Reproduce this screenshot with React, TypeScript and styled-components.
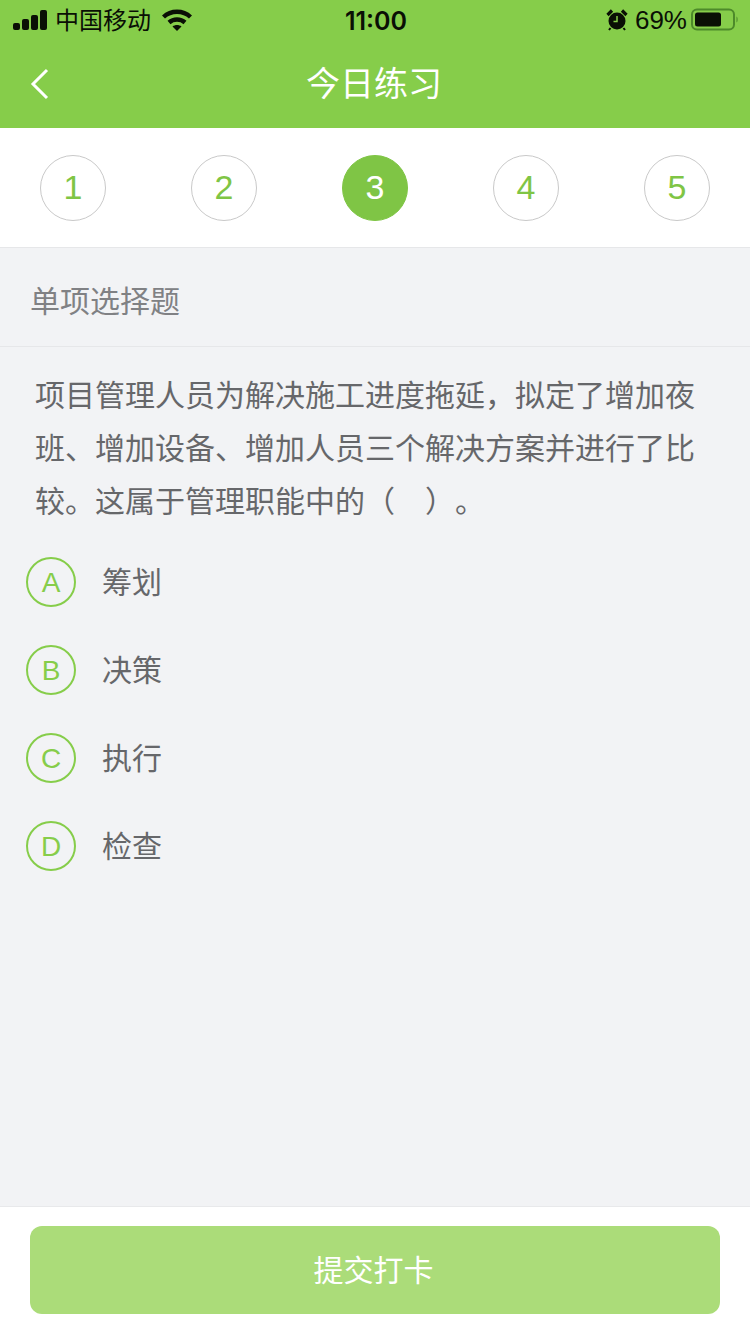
import React from "react";
import styled, { createGlobalStyle } from "styled-components";

const GlobalStyle = createGlobalStyle`
  html, body {
    margin: 0;
    padding: 0;
    background: #f2f3f5;
  }
  * {
    box-sizing: border-box;
  }
`;

const SPage = styled.div`
  width: 750px;
  height: 1334px;
  display: flex;
  flex-direction: column;
  background: #f2f3f5;
  font-family: "Liberation Sans", "Noto Sans CJK SC", sans-serif;
  text-spacing-trim: space-all;
  overflow: hidden;
`;

const SHeader = styled.header`
  height: 128px;
  background: #86cd4a;
  display: flex;
  flex-direction: column;
`;

const SStatusBar = styled.div`
  height: 40px;
  padding: 0 11px 0 13px;
  display: grid;
  grid-template-columns: 1fr auto 1fr;
  align-items: center;
  color: #0a0f05;
`;

const SStatusLeft = styled.div`
  display: flex;
  align-items: center;
`;

const SCarrier = styled.span`
  font-size: 24px;
  line-height: 1;
  margin-left: 8px;
  margin-right: 11px;
  padding-top: 2px;
`;

const STime = styled.span`
  font-family: Inter, "Liberation Sans", sans-serif;
  font-size: 25px;
  font-weight: 600;
  padding-top: 1px;
`;

const SStatusRight = styled.div`
  display: flex;
  align-items: center;
  justify-content: flex-end;
`;

const SBattery = styled.span`
  font-size: 26px;
  margin: 0 4px 0 7px;
`;

const SNavBar = styled.div`
  flex: 1;
  padding: 0 32px 0 30px;
  display: grid;
  grid-template-columns: 40px 1fr 40px;
  align-items: center;
`;

const STitle = styled.h1`
  margin: 0;
  color: #fff;
  font-size: 34px;
  font-weight: 400;
  text-align: center;
  line-height: 1;
`;

const SSteps = styled.nav`
  height: 120px;
  padding: 0 40px;
  background: #fff;
  border-bottom: 1px solid #e6e7e9;
  display: flex;
  align-items: center;
  justify-content: space-between;
`;

const SStep = styled.div<{ $active?: boolean }>`
  width: 66px;
  height: 66px;
  border-radius: 50%;
  border: 1px solid ${(p) => (p.$active ? "#7fc545" : "#c9c9c9")};
  background: ${(p) => (p.$active ? "#7fc545" : "#fff")};
  color: ${(p) => (p.$active ? "#fff" : "#7fc545")};
  font-size: 34px;
  display: flex;
  align-items: center;
  justify-content: center;
`;

const SSection = styled.div`
  height: 99px;
  padding: 4px 30px 0;
  border-bottom: 1px solid #e6e7e9;
  display: flex;
  align-items: center;
  color: #808184;
  font-size: 30px;
`;

const SMain = styled.main`
  flex: 1;
  display: flex;
  flex-direction: column;
`;

const SQuestion = styled.p`
  margin: 22px 0 0;
  padding: 0 35px;
  color: #66676a;
  font-size: 30px;
  line-height: 53px;
`;

const SOptions = styled.div`
  margin-top: 29px;
  padding-left: 26px;
  display: flex;
  flex-direction: column;
  gap: 38px;
`;

const SOption = styled.div`
  display: flex;
  align-items: center;
  height: 50px;
`;

const SBadge = styled.div`
  width: 50px;
  height: 50px;
  padding-top: 2px;
  border-radius: 50%;
  border: 2px solid #86cd4a;
  color: #86cd4a;
  font-size: 28px;
  display: flex;
  align-items: center;
  justify-content: center;
`;

const SOptionText = styled.span`
  margin-left: 26px;
  padding-bottom: 4px;
  color: #66676a;
  font-size: 30px;
`;

const SFooter = styled.footer`
  height: 128px;
  padding: 19px 30px;
  background: #fff;
  border-top: 1px solid #e8e9eb;
`;

const SSubmit = styled.button`
  width: 690px;
  height: 88px;
  padding: 0 3px 4px 0;
  border: 0;
  border-radius: 12px;
  background: #abdc79;
  color: #fff;
  font-family: inherit;
  font-size: 30px;
`;

const steps = [1, 2, 3, 4, 5];
const options = [
  { key: "A", text: "筹划" },
  { key: "B", text: "决策" },
  { key: "C", text: "执行" },
  { key: "D", text: "检查" },
];

function SignalIcon() {
  return (
    <svg width="34" height="20" viewBox="0 0 34 20" fill="#0a0f05">
      <rect x="0" y="13" width="7" height="7" rx="2" />
      <rect x="9" y="9" width="7" height="11" rx="2" />
      <rect x="18" y="5" width="7" height="15" rx="2" />
      <rect x="27" y="0" width="7" height="20" rx="2" />
    </svg>
  );
}

function WifiIcon() {
  return (
    <svg width="30" height="22" viewBox="0 0 30 22" fill="none" stroke="#0a0f05" strokeWidth="4.4">
      <path d="M1.5 8C9 1 21 1 28.5 8" />
      <path d="M7 13.5C11.5 9.5 18.5 9.5 23 13.5" />
      <path d="M10.5 17.5L15 22L19.5 17.5C17 15.5 13 15.5 10.5 17.5Z" fill="#0a0f05" stroke="none" />
    </svg>
  );
}

function AlarmIcon() {
  return (
    <svg width="22" height="22" viewBox="0 0 22 22">
      <circle cx="11" cy="12" r="8.5" fill="#0a0f05" />
      <path d="M1.5 6L6 1.5M20.5 6L16 1.5" stroke="#0a0f05" strokeWidth="3.2" />
      <path d="M4.5 19L3 21M17.5 19L19 21" stroke="#0a0f05" strokeWidth="2" />
      <path d="M11 7V12.5H7.5" stroke="#86cd4a" strokeWidth="1.5" fill="none" />
    </svg>
  );
}

function BatteryIcon() {
  return (
    <svg width="48" height="24" viewBox="0 0 48 24">
      <rect x="1" y="1.5" width="42" height="20" rx="5" fill="none" stroke="#4d8a2a" strokeWidth="2" />
      <rect x="4" y="4.5" width="26" height="14" rx="2.5" fill="#0a0f05" />
      <path d="M45.5 8.5C47 9 47 14 45.5 14.5Z" fill="#4d8a2a" />
    </svg>
  );
}

function BackIcon() {
  return (
    <svg width="20" height="32" viewBox="0 0 20 32" fill="none" stroke="#fff" strokeWidth="3">
      <path d="M17 2L3 16L17 30" />
    </svg>
  );
}

export default function App() {
  return (
    <SPage>
      <GlobalStyle />
      <SHeader>
        <SStatusBar>
          <SStatusLeft>
            <SignalIcon />
            <SCarrier>中国移动</SCarrier>
            <WifiIcon />
          </SStatusLeft>
          <STime>11:00</STime>
          <SStatusRight>
            <AlarmIcon />
            <SBattery>69%</SBattery>
            <BatteryIcon />
          </SStatusRight>
        </SStatusBar>
        <SNavBar>
          <BackIcon />
          <STitle>今日练习</STitle>
        </SNavBar>
      </SHeader>
      <SSteps>
        {steps.map((n) => (
          <SStep key={n} $active={n === 3}>
            {n}
          </SStep>
        ))}
      </SSteps>
      <SMain>
        <SSection>单项选择题</SSection>
        <SQuestion>
          项目管理人员为解决施工进度拖延，拟定了增加夜班、增加设备、增加人员三个解决方案并进行了比较。这属于管理职能中的（　）。
        </SQuestion>
        <SOptions>
          {options.map((o) => (
            <SOption key={o.key}>
              <SBadge>{o.key}</SBadge>
              <SOptionText>{o.text}</SOptionText>
            </SOption>
          ))}
        </SOptions>
      </SMain>
      <SFooter>
        <SSubmit>提交打卡</SSubmit>
      </SFooter>
    </SPage>
  );
}
